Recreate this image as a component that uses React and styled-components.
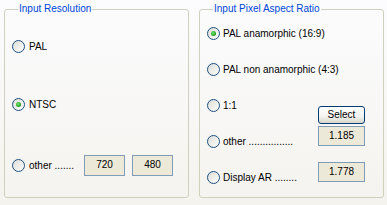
import React from "react";
import styled, { createGlobalStyle } from "styled-components";

const GlobalStyle = createGlobalStyle`
  html, body {
    margin: 0;
    padding: 0;
  }
  body {
    width: 387px;
    height: 205px;
    overflow: hidden;
    background: linear-gradient(180deg, #fcfcfe 0%, #f4f3ee 100%);
    font-family: "Liberation Sans", Arial, sans-serif;
    font-size: 10px;
    color: #000000;
  }
`;

const resolutionOptions = [
  { id: "pal", label: "PAL" },
  { id: "ntsc", label: "NTSC" },
];

const aspectOptions = [
  { id: "pal169", label: "PAL anamorphic (16:9)" },
  { id: "pal43", label: "PAL non anamorphic (4:3)" },
  { id: "square", label: "1:1" },
  { id: "other", label: "other ................" },
  { id: "display", label: "Display AR ........" },
];

const Radio = ({ checked }) => (
  <RadioCircle>
    <svg width="13" height="13" viewBox="0 0 13 13">
      <defs>
        <linearGradient id="rg" x1="0" y1="0" x2="1" y2="1">
          <stop offset="0" stopColor="#dcdbd5" />
          <stop offset="1" stopColor="#ffffff" />
        </linearGradient>
        <radialGradient id="dot" cx="0.4" cy="0.4" r="0.6">
          <stop offset="0" stopColor="#6fe56b" />
          <stop offset="1" stopColor="#1e9b1e" />
        </radialGradient>
      </defs>
      <circle cx="6.5" cy="6.5" r="6" fill="url(#rg)" stroke="#1c5180" strokeWidth="1" />
      {checked && <circle cx="6.5" cy="6.5" r="2.5" fill="url(#dot)" />}
    </svg>
  </RadioCircle>
);

const App = () => {
  const resolution = "ntsc";
  const aspect = "pal169";

  return (
    <>
      <GlobalStyle />
      <Page>
        <Group>
          <Legend>Input Resolution</Legend>
          <ResolutionList>
            {resolutionOptions.map((o) => (
              <ResolutionRow key={o.id}>
                <Radio checked={o.id === resolution} />
                <Label>{o.label}</Label>
              </ResolutionRow>
            ))}
            <ResolutionRow>
              <Radio />
              <Label $width={55}>other .......</Label>
              <ValueBox $width={41} $height={21}>720</ValueBox>
              <ValueBox $width={41} $height={21}>480</ValueBox>
            </ResolutionRow>
          </ResolutionList>
        </Group>

        <Group>
          <Legend>Input Pixel Aspect Ratio</Legend>
          <AspectBody>
            <AspectList>
              {aspectOptions.map((o) => (
                <AspectRow key={o.id}>
                  <Radio checked={o.id === aspect} />
                  <Label>{o.label}</Label>
                </AspectRow>
              ))}
            </AspectList>
            <Controls>
              <SelectButton type="button">Select</SelectButton>
              <ValueBox $width={47} $height={20}>1.185</ValueBox>
              <Spacer />
              <ValueBox $width={47} $height={20}>1.778</ValueBox>
            </Controls>
          </AspectBody>
        </Group>
      </Page>
    </>
  );
};

const Page = styled.div`
  display: flex;
  gap: 10px;
  padding: 3px 0 0 4px;
`;

const Group = styled.fieldset`
  box-sizing: border-box;
  width: 185px;
  height: 195px;
  margin: 0;
  padding: 0 7px;
  border: 1px solid #d0d0bf;
  border-radius: 3px;
  min-width: 0;
`;

const Legend = styled.legend`
  margin-left: 6px;
  padding: 0 1px;
  line-height: 12px;
  color: #0046d5;
`;

const ResolutionList = styled.div`
  display: flex;
  flex-direction: column;
  padding-top: 21px;
  gap: 37px;

  & > :last-child {
    margin-top: 3px;
  }
`;

const ResolutionRow = styled.div`
  display: flex;
  align-items: center;
  height: 21px;
`;

const RadioCircle = styled.span`
  display: flex;
  width: 13px;
  height: 13px;
  flex: none;
`;

const Label = styled.span`
  margin-left: 4px;
  white-space: nowrap;
  line-height: 13px;
  width: ${(p) => (p.$width ? `${p.$width}px` : "auto")};
`;

const ValueBox = styled.div`
  box-sizing: border-box;
  display: flex;
  align-items: center;
  justify-content: center;
  width: ${(p) => p.$width}px;
  height: ${(p) => p.$height}px;
  margin-right: 7px;
  background: #ece9d8;
  border: 1px solid #7f9db9;
  padding-bottom: 2px;
`;

const AspectBody = styled.div`
  display: grid;
  grid-template-areas: "stack";
`;

const AspectList = styled.div`
  grid-area: stack;
  display: flex;
  flex-direction: column;
  padding-top: 12px;
  gap: 23px;
`;

const AspectRow = styled.div`
  display: flex;
  align-items: center;
  height: 13px;

  & > span:last-child {
    margin-left: 3px;
  }
`;

const Controls = styled.div`
  grid-area: stack;
  justify-self: end;
  display: flex;
  flex-direction: column;
  padding-top: 91px;
  margin-right: 11px;

  & > div {
    margin-right: 0;
  }
  & > div:nth-of-type(1) {
    margin-top: 2px;
  }
`;

const Spacer = styled.span`
  height: 16px;
`;

const SelectButton = styled.button`
  box-sizing: border-box;
  width: 47px;
  height: 18px;
  padding: 0 0 1px;
  border: 1px solid #003c74;
  border-radius: 3px;
  background: linear-gradient(180deg, #ffffff 0%, #f3f3ef 60%, #d8d6cc 100%);
  font-family: "Liberation Sans", Arial, sans-serif;
  font-size: 10px;
  color: #000000;
`;

export default App;
